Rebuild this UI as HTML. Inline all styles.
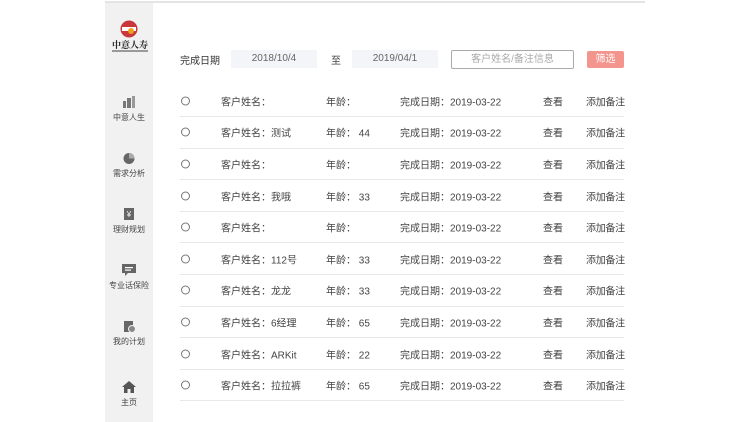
<!DOCTYPE html>
<html><head><meta charset="utf-8"><style>
*{margin:0;padding:0;box-sizing:border-box}
body{width:750px;height:422px;background:#fff;position:relative;overflow:hidden;font-family:"Liberation Sans","Noto Sans CJK SC",sans-serif;color:#444;font-size:10px}
.abs{position:absolute}
.top{left:105px;top:1px;width:540px;height:2px;background:#e4e4e4}
.side{left:105px;top:3px;width:48px;height:419px;background:#f1f1f1}
.mi{position:absolute;left:105px;width:48px;text-align:center;font-size:8px;color:#444}
.mi svg{display:block;margin:0 auto 3px}
.row{position:absolute;left:180px;width:444px;height:31.6px;border-bottom:1px solid #e8e8e8}
.row span{position:absolute;top:50%;transform:translateY(-50%);white-space:nowrap}
.radio{left:1px;width:9px;height:9px;border:1px solid #777;border-radius:50%}
.box{background:#f3f5f8;color:#666;text-align:center;line-height:18px;font-size:10px}
</style></head><body>
<div class="abs top"></div>
<div class="abs side"></div>
<svg class="abs" style="left:120px;top:20px" width="18" height="18" viewBox="0 0 18 18"><circle cx="9" cy="9" r="8.5" fill="#c8373b"/><rect x="2" y="7" width="14" height="4" fill="#fff"/><circle cx="11" cy="11" r="3" fill="#f0a020"/></svg>
<div class="abs" style="left:110px;top:38px;width:40px;text-align:center;font-size:9px;font-weight:bold;color:#222;font-family:'Noto Serif CJK SC',serif">中意人寿</div>
<div class="abs" style="left:112px;top:50px;width:36px;height:2px;background:#999"></div>

<div class="mi" style="top:95px"><svg width="14" height="14" viewBox="0 0 14 14"><rect x="1" y="6" width="3" height="7" fill="#777"/><rect x="5" y="3" width="4" height="10" fill="#777"/><rect x="10" y="1" width="3" height="12" fill="#999"/></svg>中意人生</div>
<div class="mi" style="top:151px"><svg width="14" height="14" viewBox="0 0 14 14"><circle cx="7" cy="7.5" r="5.5" fill="#666"/><path d="M7 7.5L7 2A5.5 5.5 0 0 1 12.5 7.5Z" fill="#aaa"/></svg>需求分析</div>
<div class="mi" style="top:207px"><svg width="14" height="14" viewBox="0 0 14 14"><rect x="2" y="1" width="10" height="12" fill="#666"/><text x="7" y="10" font-size="8" fill="#fff" text-anchor="middle">¥</text></svg>理财规划</div>
<div class="mi" style="top:263px"><svg width="16" height="14" viewBox="0 0 16 14"><rect x="1" y="1" width="14" height="9" fill="#666"/><path d="M4 10L4 13L7 10Z" fill="#666"/><rect x="4" y="4" width="8" height="1.2" fill="#fff"/><rect x="4" y="6.5" width="6" height="1.2" fill="#fff"/></svg>专业话保险</div>
<div class="mi" style="top:319px"><svg width="14" height="14" viewBox="0 0 14 14"><rect x="2" y="2" width="9" height="11" fill="#666"/><circle cx="10" cy="10" r="3.5" fill="#888" stroke="#f1f1f1"/></svg>我的计划</div>
<div class="mi" style="top:380px"><svg width="16" height="14" viewBox="0 0 16 14"><path d="M8 1L1 7H3V13H6.5V9H9.5V13H13V7H15Z" fill="#555"/></svg>主页</div>

<div class="abs" style="left:180px;top:52px;font-size:10px;color:#333">完成日期</div>
<div class="abs box" style="left:231px;top:50px;width:86px;height:18px">2018/10/4</div>
<div class="abs" style="left:331px;top:52px;font-size:10px">至</div>
<div class="abs box" style="left:352px;top:50px;width:86px;height:18px">2019/04/1</div>
<div class="abs" style="left:451px;top:50px;width:123px;height:19px;border:1px solid #aaa;border-radius:2px;text-align:center;line-height:17px;color:#aaa;font-size:10px">客户姓名/备注信息</div>
<div class="abs" style="left:587px;top:51px;width:37px;height:17px;background:#f3958d;border-radius:2px;color:#fff;text-align:center;line-height:17px;font-size:10px">筛选</div>

<div id="rows"></div>
<script>
var d=[["",""],["测试","44"],["",""],["我哦","33"],["",""],["112号","33"],["龙龙","33"],["6经理","65"],["ARKit","22"],["拉拉裤","65"]];
var h="";
for(var i=0;i<d.length;i++){var t=85.5+i*31.6;
h+='<div class="row" style="top:'+t+'px"><span class="radio"></span><span style="left:41px">客户姓名：'+d[i][0]+'</span><span style="left:146px">年龄：'+(d[i][1]?' '+d[i][1]:'')+'</span><span style="left:220px">完成日期：2019-03-22</span><span style="left:363px">查看</span><span style="left:406px;letter-spacing:-0.3px">添加备注</span></div>';}
document.getElementById("rows").innerHTML=h;
</script>
</body></html>
